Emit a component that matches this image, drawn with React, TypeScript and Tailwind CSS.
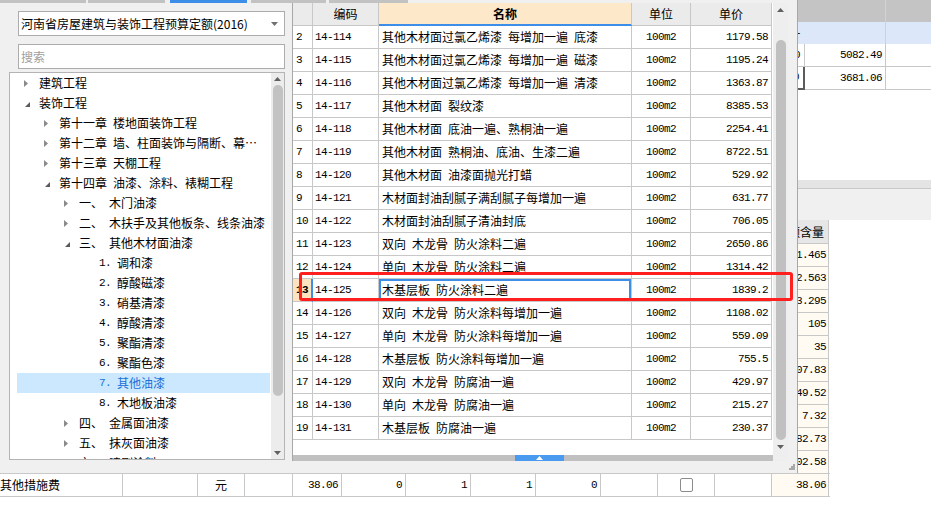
import React from 'react';

const CJK = "font-['Noto_Sans_CJK_SC',sans-serif]";
const MONO = "font-['Liberation_Mono','Noto_Sans_CJK_SC',monospace] text-[11px] tracking-[-0.6px]";

type TreeNode = { lv: number; st?: 'c' | 'o'; n?: string; t: string; sel?: boolean };

const tree: TreeNode[] = [
  { lv: 0, st: 'c', t: '建筑工程' },
  { lv: 0, st: 'o', t: '装饰工程' },
  { lv: 1, st: 'c', t: '第十一章 楼地面装饰工程' },
  { lv: 1, st: 'c', t: '第十二章 墙、柱面装饰与隔断、幕⋯' },
  { lv: 1, st: 'c', t: '第十三章 天棚工程' },
  { lv: 1, st: 'o', t: '第十四章 油漆、涂料、裱糊工程' },
  { lv: 2, st: 'c', n: '一、', t: '木门油漆' },
  { lv: 2, st: 'c', n: '二、', t: '木扶手及其他板条、线条油漆' },
  { lv: 2, st: 'o', n: '三、', t: '其他木材面油漆' },
  { lv: 3, n: '1.', t: '调和漆' },
  { lv: 3, n: '2.', t: '醇酸磁漆' },
  { lv: 3, n: '3.', t: '硝基清漆' },
  { lv: 3, n: '4.', t: '醇酸清漆' },
  { lv: 3, n: '5.', t: '聚酯清漆' },
  { lv: 3, n: '6.', t: '聚酯色漆' },
  { lv: 3, n: '7.', t: '其他油漆', sel: true },
  { lv: 3, n: '8.', t: '木地板油漆' },
  { lv: 2, st: 'c', n: '四、', t: '金属面油漆' },
  { lv: 2, st: 'c', n: '五、', t: '抹灰面油漆' },
  { lv: 2, st: 'c', n: '六、', t: '喷刷涂料' },
];

const rows: [number, string, string, string][] = [
  [2, '14-114', '其他木材面过氯乙烯漆 每增加一遍 底漆', '1179.58'],
  [3, '14-115', '其他木材面过氯乙烯漆 每增加一遍 磁漆', '1195.24'],
  [4, '14-116', '其他木材面过氯乙烯漆 每增加一遍 清漆', '1363.87'],
  [5, '14-117', '其他木材面 裂纹漆', '8385.53'],
  [6, '14-118', '其他木材面 底油一遍、熟桐油一遍', '2254.41'],
  [7, '14-119', '其他木材面 熟桐油、底油、生漆二遍', '8722.51'],
  [8, '14-120', '其他木材面 油漆面抛光打蜡', '529.92'],
  [9, '14-121', '木材面封油刮腻子满刮腻子每增加一遍', '631.77'],
  [10, '14-122', '木材面封油刮腻子清油封底', '706.05'],
  [11, '14-123', '双向 木龙骨 防火涂料二遍', '2650.86'],
  [12, '14-124', '单向 木龙骨 防火涂料二遍', '1314.42'],
  [13, '14-125', '木基层板 防火涂料二遍', '1839.2'],
  [14, '14-126', '双向 木龙骨 防火涂料每增加一遍', '1108.02'],
  [15, '14-127', '单向 木龙骨 防火涂料每增加一遍', '559.09'],
  [16, '14-128', '木基层板 防火涂料每增加一遍', '755.5'],
  [17, '14-129', '双向 木龙骨 防腐油一遍', '429.97'],
  [18, '14-130', '单向 木龙骨 防腐油一遍', '215.27'],
  [19, '14-131', '木基层板 防腐油一遍', '230.37'],
];

const amounts = ['11.465', '42.563', '13.295', '105', '35', '107.83', '149.52', '7.32', '182.73', '102.58'];

const indent = ['pl-0', 'pl-[20px]', 'pl-[40px]', 'pl-[60px]'];

// spaces in the original are half-width (6px)
const Txt = ({ s }: { s: string }) => (
  <>
    {s.split(' ').map((p, i) => (
      <React.Fragment key={i}>
        {i > 0 && <span className="inline-block w-[6px]" />}
        {p}
      </React.Fragment>
    ))}
  </>
);

const TreeRow = ({ node }: { node: TreeNode }) => (
  <div
    className={`flex h-[20px] shrink-0 items-center whitespace-nowrap ${indent[node.lv]} ${
      node.sel ? 'bg-[#cce8ff] text-[#1c6fd6]' : 'text-black'
    }`}
  >
    <span className="flex w-[22px] shrink-0 items-center">
      {node.st === 'c' && (
        <svg className="ml-[7px]" width="4" height="7">
          <polygon points="0,0 4,3.5 0,7" fill="#8a8a8a" />
        </svg>
      )}
      {node.st === 'o' && (
        <svg className="ml-[8px] mt-[3px]" width="5" height="5">
          <polygon points="5,0 5,5 0,5" fill="#5a5a5a" />
        </svg>
      )}
    </span>
    {node.lv === 3 && <span className={`inline-block w-[18px] shrink-0 ${MONO}`}>{node.n}</span>}
    {node.lv === 2 && <span className="inline-block w-[30px] shrink-0">{node.n}</span>}
    <span className="overflow-hidden">
      <Txt s={node.t} />
    </span>
  </div>
);

const UpArrow = ({ fill = '#606060' }: { fill?: string }) => (
  <svg width="7" height="4">
    <polygon points="0,4 3.5,0 7,4" fill={fill} />
  </svg>
);

const DownArrow = ({ fill = '#606060' }: { fill?: string }) => (
  <svg width="7" height="4">
    <polygon points="0,0 7,0 3.5,4" fill={fill} />
  </svg>
);

const App: React.FC = () => {
  return (
    <div className={`relative flex h-[518px] w-[931px] flex-col overflow-hidden bg-white text-[12px] ${CJK}`}>
      {/* sheet behind the dialog */}
      <div className="grid h-[90px] grid-cols-[65px_81px_60px] pl-[740px]">
        <div className="h-[22px] bg-[#c4c4c4]" />
        <div className="h-[22px] border-r border-[#d2d2d2] bg-[#c4c4c4]" />
        <div className="h-[22px] bg-[#c4c4c4]" />
        <div className={`flex h-[22px] items-center justify-end bg-[#dce8fa] pr-[4px] ${MONO}`}>-</div>
        <div className="h-[22px] border-r border-[#c8d2e2] bg-[#dce8fa]" />
        <div className="h-[22px] bg-[#dce8fa]" />
        <div className={`flex h-[23px] items-center justify-end border-r border-b border-[#c8c8c8] pr-[4px] ${MONO}`}>0</div>
        <div className={`flex h-[23px] items-center justify-end border-r border-b border-[#c8c8c8] pr-[3px] ${MONO}`}>5082.49</div>
        <div className="h-[23px] border-b border-[#c8c8c8]" />
        <div className={`flex h-[23px] items-center justify-end border-r-2 border-b-2 border-[#5c5c5c] pr-[4px] ${MONO}`}>0</div>
        <div className={`flex h-[23px] items-center justify-end border-r border-b border-[#c8c8c8] pr-[3px] ${MONO}`}>3681.06</div>
        <div className="h-[23px] border-b border-[#c8c8c8]" />
      </div>
      <div className="h-[90px]" />
      <div className="h-[9px] border-b border-[#c8c8c8] bg-[#e4e4e4]" />
      <div className="h-[31px] bg-[#f0f0f0]" />
      <div className="flex h-[253px] flex-col pl-[772px]">
        <div className="flex h-[23px] w-[57px] items-center justify-center border-r border-[#c8c8c8] bg-[#e6e6e6] whitespace-nowrap">
          定额含量
        </div>
        {amounts.map((a) => (
          <div
            key={a}
            className={`flex h-[23px] w-[57px] items-center justify-end border-t border-r border-[#c8c8c8] bg-[#fffaf2] pr-[2px] ${MONO}`}
          >
            {a}
          </div>
        ))}
      </div>
      <div className="flex h-[24px] w-[830px] border-t border-b border-[#c8c8c8]">
        <div className="flex w-[123px] items-center border-r border-[#c8c8c8] whitespace-nowrap">其他措施费</div>
        <div className="w-[75px] border-r border-[#c8c8c8]" />
        <div className="flex w-[47px] items-center justify-center border-r border-[#c8c8c8]">元</div>
        <div className="w-[48px] border-r border-[#c8c8c8]" />
        <div className={`flex w-[49px] items-center justify-end border-r border-[#c8c8c8] pr-[3px] ${MONO}`}>38.06</div>
        <div className={`flex w-[64px] items-center justify-end border-r border-[#c8c8c8] pr-[3px] ${MONO}`}>0</div>
        <div className={`flex w-[65px] items-center justify-end border-r border-[#c8c8c8] pr-[3px] ${MONO}`}>1</div>
        <div className={`flex w-[65px] items-center justify-end border-r border-[#c8c8c8] pr-[3px] ${MONO}`}>1</div>
        <div className={`flex w-[65px] items-center justify-end border-r border-[#c8c8c8] pr-[3px] ${MONO}`}>0</div>
        <div className="w-[57px] border-r border-[#c8c8c8]" />
        <div className="flex w-[57px] items-center justify-center border-r border-[#c8c8c8]">
          <div className="h-[14px] w-[13px] rounded-[2px] border border-[#8c8c8c] bg-white" />
        </div>
        <div className="w-[57px] border-r border-[#c8c8c8]" />
        <div className={`flex w-[57px] items-center justify-end border-r border-[#c8c8c8] bg-[#fffaf2] pr-[2px] ${MONO}`}>38.06</div>
      </div>

      {/* quota dialog */}
      <div className="absolute left-0 top-0 flex h-[473px] w-[798px] flex-col border-r border-[#a8a8a8] bg-[#f0f0f0]">
        <div className="flex h-[3px] shrink-0">
          <div className="w-[86px] bg-[#c2c2c2]" />
          <div className="ml-[2px] w-[77px] bg-[#c2c2c2]" />
          <div className="ml-[5px] w-[77px] bg-[#3d8ee8]" />
          <div className="ml-[4px] w-[75px] bg-[#c2c2c2]" />
          <div className="ml-[3px] w-[79px] bg-[#c2c2c2]" />
        </div>
        <div className="flex flex-1">
          {/* left: quota library tree */}
          <div className="flex w-[290px] shrink-0 flex-col">
            <div className="ml-[18px] mr-[5px] mt-[8px] flex h-[25px] items-center justify-between border border-[#acacac] bg-white pl-[2px] pr-[6px] whitespace-nowrap">
              <span>河南省房屋建筑与装饰工程预算定额(2016)</span>
              <DownArrow fill="#707070" />
            </div>
            <div className="ml-[18px] mr-[5px] mt-[8px] flex h-[25px] items-center border border-[#acacac] bg-white pl-[2px] text-[#a0a0a0]">
              搜索
            </div>
            <div className="ml-[9px] mr-[5px] mt-[3px] flex h-[388px] border border-[#b4b4b4] bg-white">
              <div className="flex flex-1 flex-col overflow-hidden pl-[7px] pr-[1px]">
                {tree.map((node, i) => (
                  <TreeRow key={i} node={node} />
                ))}
              </div>
              <div className="flex w-[13px] shrink-0 flex-col items-center bg-[#ececec] pt-[4px]">
                <UpArrow />
                <div className="mt-[4px] h-[311px] w-[10px] rounded-full bg-[#c2c2c2]" />
                <div className="mt-auto mb-[4px]">
                  <DownArrow />
                </div>
              </div>
            </div>
          </div>

          {/* right: quota list */}
          <div className="flex flex-1 flex-col pl-[2px]">
            <div className="flex h-[458px] w-[496px] border-l border-[#a8a8a8] bg-white">
              <div className="flex w-[480px] flex-col">
                <div className="grid grid-cols-[20px_66px_253px_59px_81px]">
                  <div className="h-[23px] border-r border-b border-[#c8c8c8] bg-[#ebebeb]" />
                  <div className="flex h-[23px] items-center justify-center border-r border-b border-[#c8c8c8] bg-[#ebebeb]">编码</div>
                  <div className="flex h-[23px] items-center justify-center border-r border-b-2 border-r-[#c8c8c8] border-b-[#3d8ee8] bg-[#fde8c9] font-bold">
                    名称
                  </div>
                  <div className="flex h-[23px] items-center justify-center border-r border-b border-[#c8c8c8] bg-[#ebebeb]">单位</div>
                  <div className="flex h-[23px] items-center justify-center border-r border-b border-[#c8c8c8] bg-[#ebebeb]">单价</div>
                  {rows.map(([no, code, name, price]) => {
                    const cur = no === 13;
                    return (
                      <React.Fragment key={no}>
                        <div
                          className={`flex h-[23px] items-center border-b border-[#c8c8c8] pl-[3px] ${MONO} ${
                            cur ? 'border-r-2 border-r-[#3d8ee8] bg-[#fde4c0] font-bold' : 'border-r'
                          }`}
                        >
                          {no}
                        </div>
                        <div className={`flex h-[23px] items-center border-r border-b border-[#c8c8c8] pl-[2px] ${MONO}`}>{code}</div>
                        <div
                          className={`flex h-[23px] items-center overflow-hidden whitespace-nowrap border-r border-b border-[#c8c8c8] pl-[3px] ${
                            cur ? 'shadow-[inset_0_0_0_2px_#3d8ee8]' : ''
                          }`}
                        >
                          <Txt s={name} />
                        </div>
                        <div className={`flex h-[23px] items-center justify-center border-r border-b border-[#c8c8c8] ${MONO}`}>100m2</div>
                        <div className={`flex h-[23px] items-center justify-end border-r border-b border-[#c8c8c8] pr-[3px] ${MONO}`}>
                          {price}
                        </div>
                      </React.Fragment>
                    );
                  })}
                </div>
                <div className="flex-1" />
                <div className="flex h-[6px] bg-[#c0c0c0]">
                  <div className="ml-[222px] flex w-[49px] items-center justify-center bg-[#4a9af0]">
                    <UpArrow fill="#ffffff" />
                  </div>
                </div>
              </div>
              <div className="flex w-[15px] flex-col items-center bg-[#eeeeee] pt-[5px]">
                <UpArrow />
                <div className="mt-[28px] h-[400px] w-[10px] rounded-full bg-[#c0c0c0]" />
                <div className="mt-[5px]">
                  <DownArrow />
                </div>
              </div>
            </div>
            <div className="flex flex-1 items-start justify-end pr-[2px] pt-[2px]">
              <svg width="7" height="7">
                <rect x="5" y="1" width="2" height="2" fill="#a8a8a8" />
                <rect x="3" y="3" width="2" height="2" fill="#a8a8a8" />
                <rect x="5" y="3" width="2" height="2" fill="#a8a8a8" />
                <rect x="1" y="5" width="2" height="2" fill="#a8a8a8" />
                <rect x="3" y="5" width="2" height="2" fill="#a8a8a8" />
                <rect x="5" y="5" width="2" height="2" fill="#a8a8a8" />
              </svg>
            </div>
          </div>
        </div>
      </div>

      {/* red mark drawn over the screenshot */}
      <div className="pointer-events-none absolute left-[299px] top-[272px] h-[29px] w-[494px] rounded-[3px] border-[3px] border-[#ff1f1f]" />
    </div>
  );
};

export default App;
